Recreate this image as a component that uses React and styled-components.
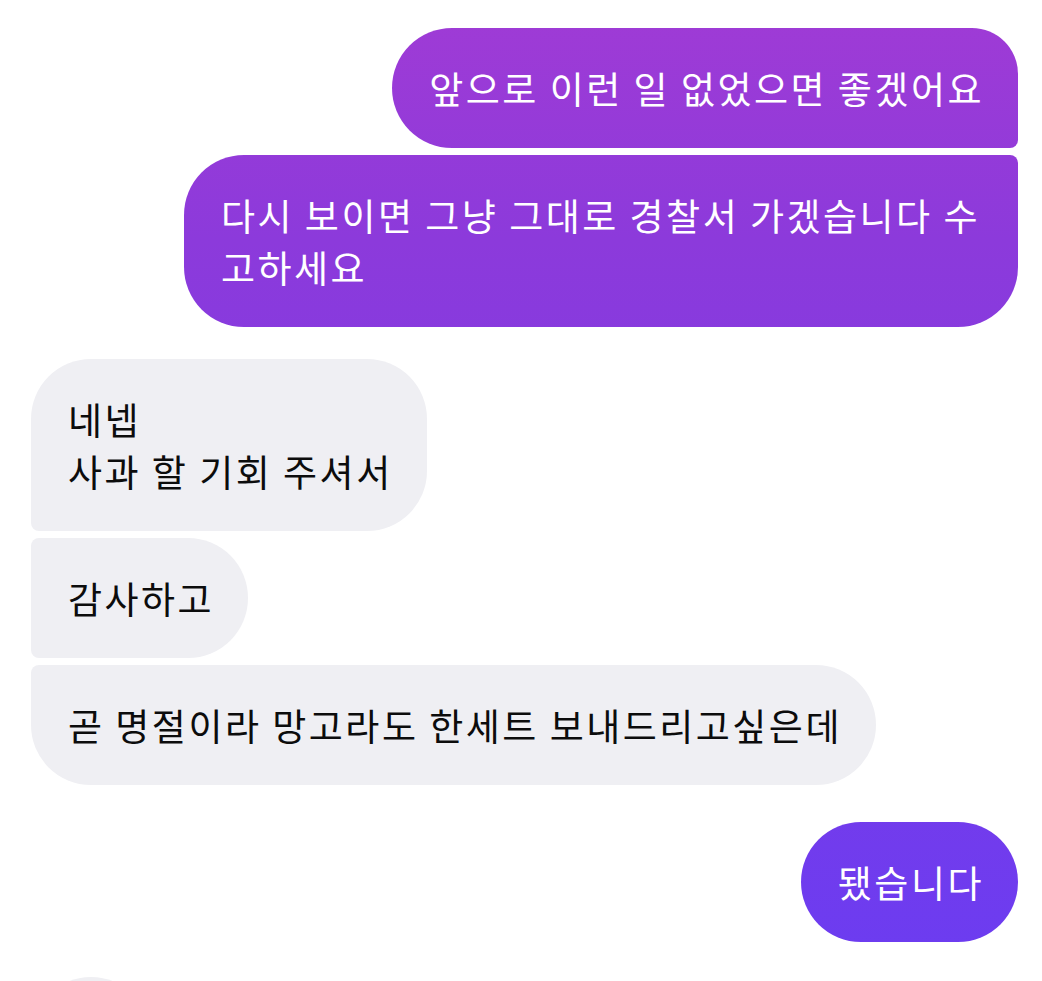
import React from "react";
import styled, { createGlobalStyle, css } from "styled-components";

const GlobalStyle = createGlobalStyle`
  html, body {
    margin: 0;
    padding: 0;
    background: #ffffff;
    overflow: hidden;
  }
  body {
    font-family: "Noto Sans CJK KR", "Noto Sans", sans-serif;
  }
`;

const Thread = styled.div`
  display: flex;
  flex-direction: column;
  padding: 28px 24px 0 31px;
  box-sizing: border-box;
  width: 1042px;
`;

const Group = styled.div`
  display: flex;
  flex-direction: column;
  align-items: ${(p) => (p.$mine ? "flex-end" : "flex-start")};
  gap: 7px;
  margin-bottom: ${(p) => p.$after ?? 37}px;
`;

const BIG = 60;
const SMALL = 8;

const Bubble = styled.div`
  box-sizing: border-box;
  padding: 34px 34px 34px 37px;
  font-size: 37px;
  line-height: 52px;
  letter-spacing: 2.5px;
  white-space: pre-line;
  border-radius: ${(p) => p.$r.map((v) => `${v}px`).join(" ")};
  ${(p) =>
    p.$mine
      ? css`
          max-width: 834px;
          color: #ffffff;
          background: linear-gradient(
            to bottom,
            #a03bd5 0px,
            #8c3adb 240px,
            #6b3cf1 981px
          );
          background-attachment: fixed;
        `
      : css`
          max-width: 900px;
          color: #0c0c0c;
          background: #efeff3;
        `}
`;

const Indicator = styled(Bubble)`
  width: 120px;
  height: 120px;
  padding: 0;
`;

export default function App() {
  return (
    <>
      <GlobalStyle />
      <Thread>
        <Group $mine $after={32}>
          <Bubble $mine $r={[BIG, 46, SMALL, BIG]}>
            앞으로 이런 일 없었으면 좋겠어요
          </Bubble>
          <Bubble $mine $r={[BIG, SMALL, BIG, BIG]}>
            다시 보이면 그냥 그대로 경찰서 가겠습니다 수고하세요
          </Bubble>
        </Group>
        <Group>
          <Bubble $r={[BIG, BIG, BIG, SMALL]}>{"네넵\n사과 할 기회 주셔서"}</Bubble>
          <Bubble $r={[SMALL, BIG, BIG, SMALL]}>감사하고</Bubble>
          <Bubble $r={[SMALL, BIG, BIG, BIG]}>
            곧 명절이라 망고라도 한세트 보내드리고싶은데
          </Bubble>
        </Group>
        <Group $mine $after={35}>
          <Bubble $mine $r={[BIG, BIG, BIG, BIG]}>
            됐습니다
          </Bubble>
        </Group>
        <Group>
          <Indicator $r={[BIG, BIG, BIG, BIG]} />
        </Group>
      </Thread>
    </>
  );
}
